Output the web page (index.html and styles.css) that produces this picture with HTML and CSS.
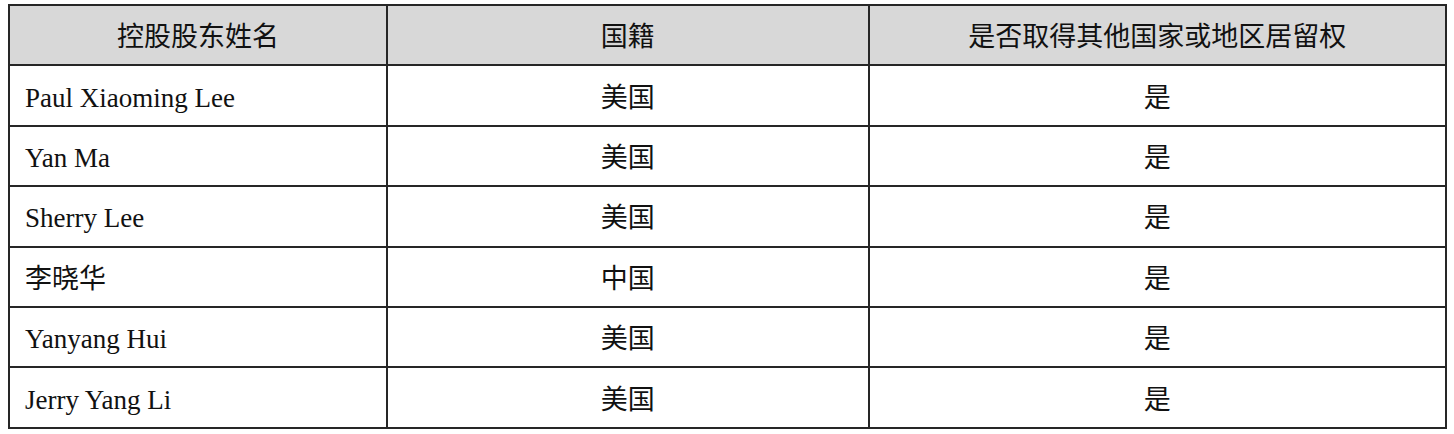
FILE: index.html
```html
<!DOCTYPE html>
<html lang="zh-CN">
<head>
<meta charset="utf-8">
<title>控股股东</title>
<link rel="stylesheet" href="styles.css">
</head>
<body>
<table class="holders">
  <colgroup>
    <col class="c-name">
    <col class="c-nat">
    <col class="c-res">
  </colgroup>
  <thead>
    <tr>
      <th>控股股东姓名</th>
      <th>国籍</th>
      <th>是否取得其他国家或地区居留权</th>
    </tr>
  </thead>
  <tbody>
    <tr><td class="name">Paul Xiaoming Lee</td><td>美国</td><td>是</td></tr>
    <tr><td class="name">Yan Ma</td><td>美国</td><td>是</td></tr>
    <tr><td class="name">Sherry Lee</td><td>美国</td><td>是</td></tr>
    <tr><td class="name">李晓华</td><td>中国</td><td>是</td></tr>
    <tr><td class="name">Yanyang Hui</td><td>美国</td><td>是</td></tr>
    <tr><td class="name">Jerry Yang Li</td><td>美国</td><td>是</td></tr>
  </tbody>
</table>
</body>
</html>
```

FILE: styles.css
```css
html, body {
  margin: 0;
  background: #ffffff;
}
body {
  padding: 4px 7px 0 8px;
  font-family: "Liberation Serif", "Noto Sans CJK SC", serif;
  font-size: 27px;
  color: #111;
}
.holders {
  border-collapse: collapse;
  table-layout: fixed;
  width: 1439px;
}
.c-name { width: 378px; }
.c-nat { width: 481.5px; }
.c-res { width: auto; }
.holders th,
.holders td {
  border: 2px solid #262626;
  height: 53.4px;
  padding: 5px 0 0 0;
  text-align: center;
  vertical-align: middle;
  font-weight: normal;
  line-height: 1;
}
.holders th {
  background: #d8d8d8;
}
.holders td.name {
  text-align: left;
  padding-left: 15px;
}
```
